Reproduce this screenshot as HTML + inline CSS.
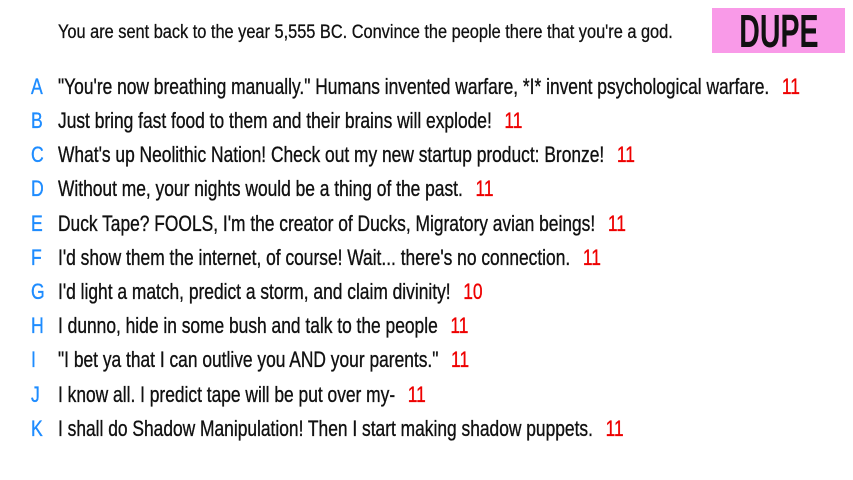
<!DOCTYPE html>
<html><head><style>
body{margin:0;width:853px;height:480px;background:#fff;overflow:hidden;position:relative;font-family:"Liberation Sans Narrow","Liberation Sans",sans-serif;color:#111}
.h{position:absolute;left:58px;top:22px;font-size:19px;white-space:nowrap;transform:scaleX(0.86);transform-origin:left top;-webkit-text-stroke:0.3px #111}
.dupe{position:absolute;left:712px;top:8px;width:133px;height:45px;background:#f99ae8;text-align:center;font-size:46px;line-height:46px;font-weight:bold}
.dupe span{display:inline-block;transform:scaleX(0.62)}
.r{position:absolute;left:0;font-size:22px;white-space:nowrap;height:30px;line-height:30px;-webkit-text-stroke:0.35px currentColor}
.l{position:absolute;left:31px;color:#1e8cff;transform:scaleX(0.8);transform-origin:left}
.t{position:absolute;left:58px;transform:scaleX(0.79);transform-origin:left}
.n{color:#e00;margin-left:16px}
</style></head><body>
<div class="h">You are sent back to the year 5,555 BC. Convince the people there that you're a god.</div>
<div class="dupe"><span>DUPE</span></div>
<div class="r" style="top:72px"><span class="l">A</span><span class="t">"You're now breathing manually." Humans invented warfare, *I* invent psychological warfare.<span class="n">11</span></span></div>
<div class="r" style="top:106px"><span class="l">B</span><span class="t">Just bring fast food to them and their brains will explode!<span class="n">11</span></span></div>
<div class="r" style="top:140px"><span class="l">C</span><span class="t">What's up Neolithic Nation! Check out my new startup product: Bronze!<span class="n">11</span></span></div>
<div class="r" style="top:174px"><span class="l">D</span><span class="t">Without me, your nights would be a thing of the past.<span class="n">11</span></span></div>
<div class="r" style="top:209px"><span class="l">E</span><span class="t">Duck Tape? FOOLS, I'm the creator of Ducks, Migratory avian beings!<span class="n">11</span></span></div>
<div class="r" style="top:243px"><span class="l">F</span><span class="t">I'd show them the internet, of course! Wait... there's no connection.<span class="n">11</span></span></div>
<div class="r" style="top:277px"><span class="l">G</span><span class="t">I'd light a match, predict a storm, and claim divinity!<span class="n">10</span></span></div>
<div class="r" style="top:311px"><span class="l">H</span><span class="t">I dunno, hide in some bush and talk to the people<span class="n">11</span></span></div>
<div class="r" style="top:345px"><span class="l">I</span><span class="t">"I bet ya that I can outlive you AND your parents."<span class="n">11</span></span></div>
<div class="r" style="top:380px"><span class="l">J</span><span class="t">I know all. I predict tape will be put over my-<span class="n">11</span></span></div>
<div class="r" style="top:414px"><span class="l">K</span><span class="t">I shall do Shadow Manipulation! Then I start making shadow puppets.<span class="n">11</span></span></div>
</body></html>
